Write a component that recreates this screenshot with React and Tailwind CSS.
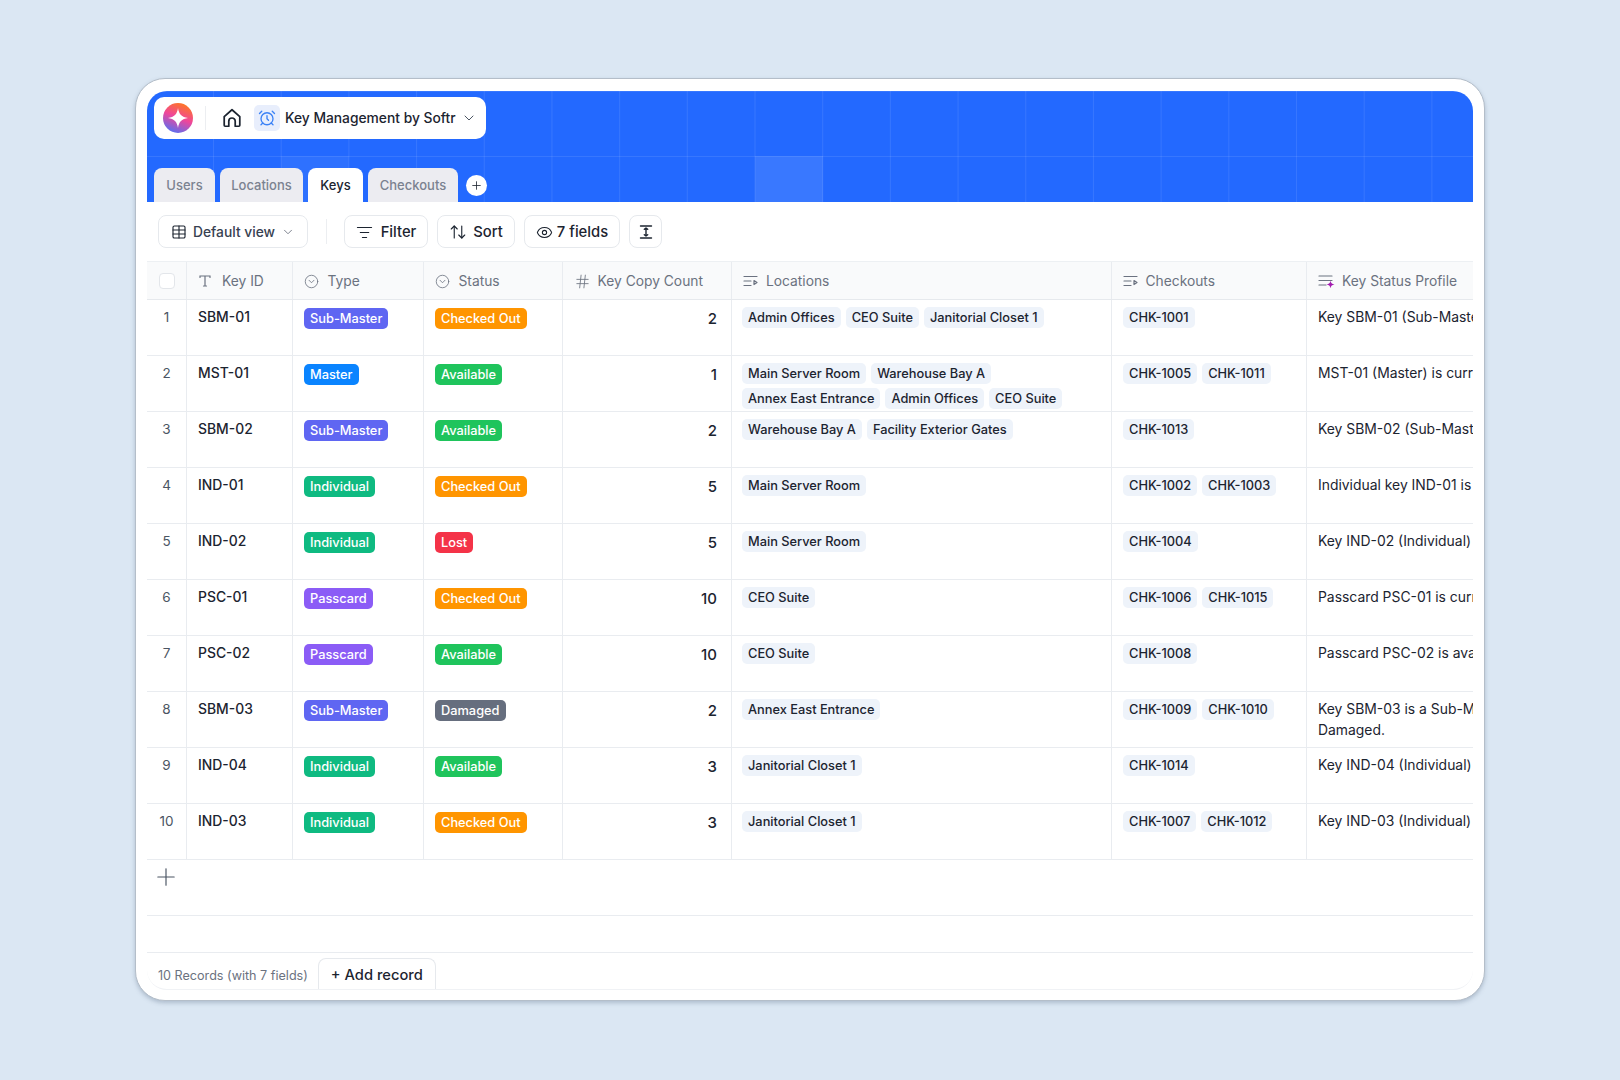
import { AlarmClock, ArrowUpDown, ChevronDown, CircleChevronDown, Eye, Hash, ListFilter, Plus, Table } from "lucide-react";

const rows = [
  { id: "SBM-01", type: "Sub-Master", status: "Checked Out", count: 2, locations: ["Admin Offices", "CEO Suite", "Janitorial Closet 1"], checkouts: ["CHK-1001"], profile: ["Key SBM-01 (Sub-Master) is checked out."] },
  { id: "MST-01", type: "Master", status: "Available", count: 1, locations: ["Main Server Room", "Warehouse Bay A", "Annex East Entrance", "Admin Offices", "CEO Suite"], checkouts: ["CHK-1005", "CHK-1011"], profile: ["MST-01 (Master) is currently available."] },
  { id: "SBM-02", type: "Sub-Master", status: "Available", count: 2, locations: ["Warehouse Bay A", "Facility Exterior Gates"], checkouts: ["CHK-1013"], profile: ["Key SBM-02 (Sub-Master) is available."] },
  { id: "IND-01", type: "Individual", status: "Checked Out", count: 5, locations: ["Main Server Room"], checkouts: ["CHK-1002", "CHK-1003"], profile: ["Individual key IND-01 is checked out."] },
  { id: "IND-02", type: "Individual", status: "Lost", count: 5, locations: ["Main Server Room"], checkouts: ["CHK-1004"], profile: ["Key IND-02 (Individual) is lost."] },
  { id: "PSC-01", type: "Passcard", status: "Checked Out", count: 10, locations: ["CEO Suite"], checkouts: ["CHK-1006", "CHK-1015"], profile: ["Passcard PSC-01 is currently out."] },
  { id: "PSC-02", type: "Passcard", status: "Available", count: 10, locations: ["CEO Suite"], checkouts: ["CHK-1008"], profile: ["Passcard PSC-02 is available."] },
  { id: "SBM-03", type: "Sub-Master", status: "Damaged", count: 2, locations: ["Annex East Entrance"], checkouts: ["CHK-1009", "CHK-1010"], profile: ["Key SBM-03 is a Sub-Master key", "Damaged."] },
  { id: "IND-04", type: "Individual", status: "Available", count: 3, locations: ["Janitorial Closet 1"], checkouts: ["CHK-1014"], profile: ["Key IND-04 (Individual) is available."] },
  { id: "IND-03", type: "Individual", status: "Checked Out", count: 3, locations: ["Janitorial Closet 1"], checkouts: ["CHK-1007", "CHK-1012"], profile: ["Key IND-03 (Individual) is out."] },
];

const badgeColors = {
  "Sub-Master": "bg-[#5f66f2]",
  Master: "bg-[#0a84ff]",
  Individual: "bg-[#0fba81]",
  Passcard: "bg-[#8b5cf6]",
  "Checked Out": "bg-[#ff9500]",
  Available: "bg-[#1fc45c]",
  Lost: "bg-[#f43348]",
  Damaged: "bg-[#666e7e]",
};

function HomeIcon() {
  return (
    <svg width="22" height="22" viewBox="0 0 24 24" fill="none" stroke="#1c2430" strokeWidth="1.900" strokeLinejoin="round" strokeLinecap="round">
      <path d="M3.500 10.500 12 3l8.500 7.500V20a1 1 0 0 1-1 1H15.500v-5.500a3.500 3.500 0 0 0-7 0V21H4.500a1 1 0 0 1-1-1z" />
    </svg>
  );
}

function SparkLogo() {
  return (
    <svg width="30" height="30" viewBox="0 0 30 30">
      <defs>
        <linearGradient id="logoFill" x1="0.75" y1="0" x2="0.35" y2="1">
          <stop offset="0" stopColor="#ff7a1a" />
          <stop offset="0.5" stopColor="#f0469a" />
          <stop offset="1" stopColor="#5a6ff0" />
        </linearGradient>
      </defs>
      <circle cx="15" cy="15" r="15" fill="url(#logoFill)" />
      <path d="M15 5c.9 6.300 3.700 9.100 10 10-6.300.9-9.100 3.700-10 10-.9-6.300-3.700-9.100-10-10 6.300-.9 9.100-3.700 10-10z" fill="#fff" />
    </svg>
  );
}

function TextFieldIcon() {
  return (
    <svg width="14" height="14" viewBox="0 0 14 14" fill="none" stroke="#6b7280" strokeWidth="1.200" strokeLinecap="round">
      <path d="M2 3.500V2h10v1.500M7 2v10M5.500 12h3" />
    </svg>
  );
}

function LinkedIcon() {
  return (
    <svg width="15" height="14" viewBox="0 0 15 14" fill="none" stroke="#6b7280" strokeWidth="1.200" strokeLinecap="round" strokeLinejoin="round">
      <path d="M1 2.500h13M1 7h7M1 11.500h7M11 6.500l3 2-3 2z" />
    </svg>
  );
}

function AiFieldIcon() {
  return (
    <svg width="17" height="14" viewBox="0 0 17 14" fill="none" stroke="#6b7280" strokeWidth="1.200" strokeLinecap="round">
      <path d="M1 2h13M1 6.500h13M1 11h7" />
      <path d="M12.500 6.500c.4 2.700 1.300 3.600 4 4-2.700.4-3.600 1.300-4 4-.4-2.700-1.300-3.600-4-4 2.700-.4 3.600-1.300 4-4z" fill="#a21caf" stroke="none" />
    </svg>
  );
}

function RowHeightIcon() {
  return (
    <svg width="16" height="16" viewBox="0 0 16 16" fill="none" stroke="#1c2430" strokeWidth="1.400" strokeLinecap="round" strokeLinejoin="round">
      <path d="M2.500 2h11M2.500 14h11M8 4v8M6.300 5.300 8 4l1.700 1.300M6.300 10.700 8 12l1.700-1.300" />
    </svg>
  );
}

function HeaderCell({ icon, label, className }) {
  return (
    <div className={`flex items-center pl-[11px] pt-[2px] border-r border-[#e9ecf0] ${className}`}>
      {icon}
      <span>{label}</span>
    </div>
  );
}

function Badge({ label }) {
  return (
    <span className={`flex h-[21px] items-center rounded-[5px] px-[6px] pt-px text-[12.800px] font-medium text-white ${badgeColors[label]}`}>
      {label}
    </span>
  );
}

function Tag({ label }) {
  return (
    <span className="flex h-[21px] items-center rounded-[5px] bg-[#eef3fa] px-[6px] pt-px text-[12.800px] font-medium text-[#1c2430]">
      {label}
    </span>
  );
}

function ToolButton({ className, children }) {
  return (
    <button className={`flex h-[33px] items-center justify-center rounded-lg border border-[#e6e9ed] bg-white pt-[2px] text-[14.800px] font-medium text-[#1c2430] ${className}`}>
      {children}
    </button>
  );
}

function Tab({ label, active }) {
  const look = active ? "bg-white text-[#1c2430]" : "bg-[#ececf1] text-[#7b8290]";
  const width = { Users: "w-[61px]", Locations: "w-[83px]", Keys: "w-[55px]", Checkouts: "w-[90px]" }[label];
  return (
    <div className={`flex h-[34px] items-center justify-center rounded-t-lg pt-[2px] text-[13px] font-medium ${width} ${look}`}>
      {label}
    </div>
  );
}

function Row({ row, index }) {
  return (
    <div className="flex h-[56px] border-b border-[#e9ecf0] text-[13.900px]">
      <div className="w-[40px] shrink-0 border-r border-[#e9ecf0] pt-[7px] text-center text-[13.500px] leading-[21px] text-[#4b5563]">
        {index + 1}
      </div>
      <div className="w-[105.500px] shrink-0 border-r border-[#e9ecf0] pl-[11px] pt-[7px] font-medium leading-[21px] text-[#1c2430]">
        {row.id}
      </div>
      <div className="flex w-[131px] shrink-0 items-start border-r border-[#e9ecf0] pl-[11.500px] pt-[8px]">
        <Badge label={row.type} />
      </div>
      <div className="flex w-[139px] shrink-0 items-start border-r border-[#e9ecf0] pl-[11.500px] pt-[8px]">
        <Badge label={row.status} />
      </div>
      <div className="w-[169.500px] shrink-0 border-r border-[#e9ecf0] pr-[14px] pt-[8px] text-right text-[15px] font-medium leading-[21px] text-[#1c2430]">
        {row.count}
      </div>
      <div className="flex w-[379.500px] shrink-0 flex-wrap content-start gap-x-[5px] gap-y-[4px] border-r border-[#e9ecf0] pl-[10px] pt-[7px]">
        {row.locations.map((loc) => (
          <Tag key={loc} label={loc} />
        ))}
      </div>
      <div className="flex w-[195px] shrink-0 content-start items-start gap-x-[5px] border-r border-[#e9ecf0] pl-[11.500px] pt-[7px]">
        {row.checkouts.map((chk) => (
          <Tag key={chk} label={chk} />
        ))}
      </div>
      <div className="min-w-0 flex-1 overflow-hidden whitespace-nowrap pl-[11.500px] pt-[7px] leading-[21px] text-[#1c2430]">
        {row.profile.map((line) => (
          <div key={line}>{line}</div>
        ))}
      </div>
    </div>
  );
}

export default function App() {
  return (
    <div className="flex h-[1080px] items-center justify-center bg-[#dbe7f3] pb-px font-['Inter',sans-serif]">
      <div className="flex h-[923px] w-[1350px] flex-col rounded-[30px] border-[1.500px] border-[#b4bec9] bg-white px-[11px] pb-[10px] pt-[11.500px] shadow-[0_2px_4px_rgba(90,110,135,0.35)]">
        <div className="flex h-full flex-col overflow-hidden rounded-[20px] border-b border-[#f0f2f5]">
          {/* blue banner */}
          <div className="relative flex h-[111px] shrink-0 flex-col justify-between bg-[#2369ff] bg-[linear-gradient(to_right,rgba(255,255,255,0.09)_1px,transparent_1px),linear-gradient(to_bottom,rgba(255,255,255,0.09)_1px,transparent_1px)] bg-[size:67.700px_65px] bg-[position:-1.700px_0] px-[7px] pt-[6px]">
            <div className="absolute left-[134px] top-[65px] h-[46px] w-[68px] bg-white/5" />
            <div className="absolute left-[608px] top-[65px] h-[46px] w-[68px] bg-white/10" />
            <div className="relative flex h-[42px] w-[332px] items-center rounded-[10px] bg-white pl-[9px]">
              <SparkLogo />
              <div className="ml-[12px] h-[24px] w-px bg-[#eceef1]" />
              <div className="ml-[15px]">
                <HomeIcon />
              </div>
              <div className="ml-[11px] flex h-[26px] w-[26px] items-center justify-center rounded-[5px] bg-[#e8eefc]">
                <AlarmClock size={18} strokeWidth={1.800} color="#3b82f6" />
              </div>
              <span className="ml-[5px] pt-px text-[13.800px] font-medium text-[#1c2430]">Key Management by Softr</span>
              <ChevronDown size={16} strokeWidth={1.500} color="#4b5563" className="ml-[5px]" />
            </div>
            <div className="relative flex items-end gap-[5px]">
              <Tab label="Users" />
              <Tab label="Locations" />
              <Tab label="Keys" active />
              <Tab label="Checkouts" />
              <div className="mb-[6px] ml-[3px] flex h-[21px] w-[21px] items-center justify-center rounded-full bg-white">
                <Plus size={13} strokeWidth={1.500} color="#1c2430" />
              </div>
            </div>
          </div>

          {/* toolbar */}
          <div className="flex h-[60px] shrink-0 items-start border-b border-[#edf0f3] pl-[11px] pt-[13px]">
            <button className="flex h-[33px] w-[150px] items-center justify-center gap-[6px] rounded-lg border border-[#e6e9ed] bg-white pt-[2px] text-[13.800px] font-medium text-[#374151]">
              <Table size={16} strokeWidth={1.700} color="#1c2430" />
              Default view
              <ChevronDown size={14} strokeWidth={1.500} color="#6b7280" />
            </button>
            <div className="ml-[18px] mr-[17px] mt-[4px] h-[25px] w-px bg-[#eceef1]" />
            <ToolButton className="w-[84px] gap-[8px]">
              <ListFilter size={17} strokeWidth={1.500} />
              Filter
            </ToolButton>
            <ToolButton className="ml-[9px] w-[78px] gap-[6px]">
              <ArrowUpDown size={18} strokeWidth={1.500} />
              Sort
            </ToolButton>
            <ToolButton className="ml-[9px] w-[96px] gap-[4px]">
              <Eye size={17} strokeWidth={1.500} />
              7 fields
            </ToolButton>
            <ToolButton className="ml-[9px] w-[33px]">
              <RowHeightIcon />
            </ToolButton>
          </div>

          {/* table head */}
          <div className="flex h-[38px] shrink-0 border-b border-[#e6e9ed] bg-[#f9fafb] text-[13.800px] text-[#6b7280]">
            <div className="flex w-[40px] shrink-0 items-center justify-center border-r border-[#e9ecf0] pt-[2px]">
              <div className="h-[16px] w-[16px] rounded-[4px] border border-[#e3e6ea] bg-white" />
            </div>
            <HeaderCell className="w-[105.500px] shrink-0 gap-[10px]" icon={<TextFieldIcon />} label="Key ID" />
            <HeaderCell className="w-[131px] shrink-0 gap-[9px]" icon={<CircleChevronDown size={15} strokeWidth={1.300} />} label="Type" />
            <HeaderCell className="w-[139px] shrink-0 gap-[9px]" icon={<CircleChevronDown size={15} strokeWidth={1.300} />} label="Status" />
            <HeaderCell className="w-[169.500px] shrink-0 gap-[7px]" icon={<Hash size={17} strokeWidth={1.200} />} label="Key Copy Count" />
            <HeaderCell className="w-[379.500px] shrink-0 gap-[8px]" icon={<LinkedIcon />} label="Locations" />
            <HeaderCell className="w-[195px] shrink-0 gap-[8px]" icon={<LinkedIcon />} label="Checkouts" />
            <div className="flex min-w-0 flex-1 items-center gap-[7px] pl-[11.500px] pt-[2px]">
              <AiFieldIcon />
              <span className="whitespace-nowrap">Key Status Profile</span>
            </div>
          </div>

          {/* rows */}
          {rows.map((row, i) => (
            <Row key={row.id} row={row} index={i} />
          ))}

          <div className="h-[56px] shrink-0 border-b border-[#e9ecf0] pl-[4.500px] pt-[3px]">
            <Plus size={28} strokeWidth={1} color="#4b5563" />
          </div>
          <div className="h-[37px] shrink-0 border-b border-[#e9ecf0]" />

          {/* footer */}
          <div className="flex min-h-0 flex-1 items-end pl-[11px]">
            <span className="mb-[3px] text-[12.600px] text-[#6b7280]">10 Records (with 7 fields)</span>
            <button className="ml-[10px] h-[31px] rounded-t-lg border border-b-0 border-[#e6e9ed] px-[12px] pt-[3px] text-[14.700px] font-medium text-[#1c2430]">
              + Add record
            </button>
          </div>
        </div>
      </div>
    </div>
  );
}
